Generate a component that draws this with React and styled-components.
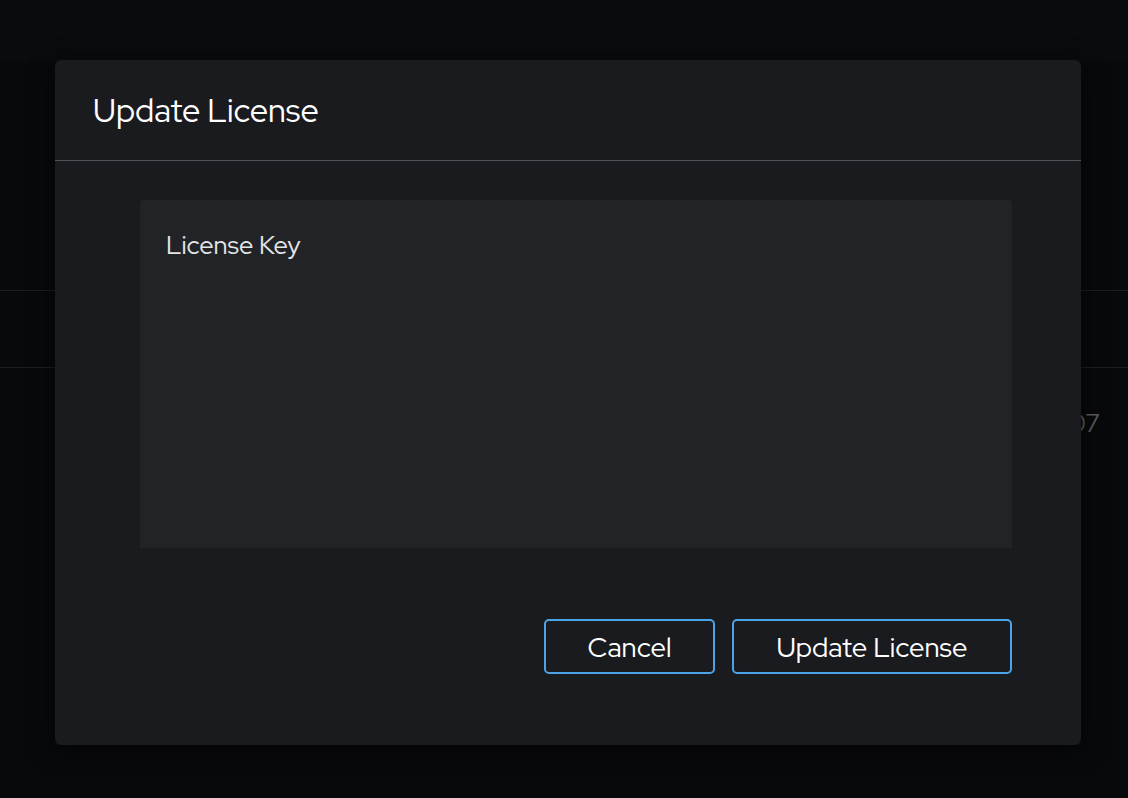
import styled, { createGlobalStyle } from 'styled-components'


const GlobalStyle = createGlobalStyle`
    html, body {
        margin: 0;
        padding: 0;
        background: #08090b;
        font-family: "Red Hat Display", "Open Sans", "Noto Sans", sans-serif;
    }
`

const StyledPage = styled.div`
    position: relative;
    width: 1128px;
    height: 798px;
    overflow: hidden;
    background: #08090b;
`

const StyledTopBar = styled.div`
    height: 62px;
    background: #0a0b0d;
`

const StyledSpacer = styled.div`
    height: 228px;
`

const StyledRow = styled.div`
    display: flex;
    align-items: center;
    justify-content: flex-end;
    height: ${ ({ $height }) => $height }px;
    padding-right: 28px;
    border-top: 1px solid #1e1f22;

    color: #5b5d61;
    font-size: 25px;
`

const StyledModal = styled.div`
    position: absolute;
    top: 60px;
    left: 55px;
    width: 1026px;
    height: 685px;
    display: flex;
    flex-direction: column;

    background: #191b1f;
    border-radius: 6px;
    box-shadow: 0 4px 24px rgba( 0, 0, 0, 0.6 );
`

const StyledHeader = styled.header`
    display: flex;
    align-items: center;
    height: 100px;
    padding: 0 38px;
    border-bottom: 1px solid #4e5156;
`

const StyledTitle = styled.h2`
    margin: 0;

    color: #ffffff;
    font-size: 32.5px;
    font-weight: 400;
`

const StyledBody = styled.div`
    display: flex;
    flex-direction: column;
    gap: 71px;
    padding: 39px 69px 71px 85px;
`

const StyledField = styled.div`
    height: 348px;
    padding: 28px 26px;
    box-sizing: border-box;

    background: #212327;
    border-radius: 4px 4px 0 0;
`

const StyledLabel = styled.label`
    color: #e4e5e6;
    font-size: 25.5px;
`

const StyledFooter = styled.div`
    display: flex;
    justify-content: flex-end;
    gap: 17px;
`

const StyledButton = styled.button`
    width: ${ ({ $width }) => $width }px;
    height: 55px;

    background: transparent;
    border: 2px solid #4ba3e8;
    border-radius: 5px;
    color: #ffffff;
    font-family: inherit;
    font-size: 27.5px;
`


const App = () => (
    <>
        <GlobalStyle />
        <StyledPage>
            <StyledTopBar />
            <StyledSpacer />
            <StyledRow $height={ 76 } />
            <StyledRow $height={ 110 }>07</StyledRow>

            <StyledModal>
                <StyledHeader>
                    <StyledTitle>Update License</StyledTitle>
                </StyledHeader>
                <StyledBody>
                    <StyledField>
                        <StyledLabel>License Key</StyledLabel>
                    </StyledField>
                    <StyledFooter>
                        <StyledButton $width={ 171 }>Cancel</StyledButton>
                        <StyledButton $width={ 280 }>Update License</StyledButton>
                    </StyledFooter>
                </StyledBody>
            </StyledModal>
        </StyledPage>
    </>
)


export default App
